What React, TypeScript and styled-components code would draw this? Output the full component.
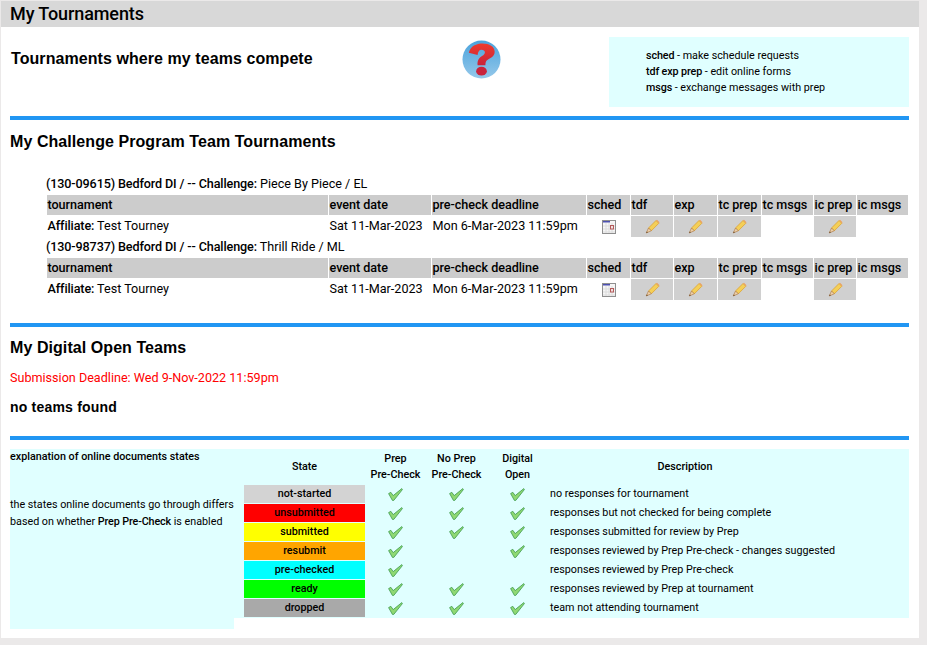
import styled, { createGlobalStyle } from "styled-components";

const GlobalStyle = createGlobalStyle`
  html, body {
    margin: 0;
    padding: 0;
    background: #ebe9e9;
  }
  body {
    font-family: Roboto, "Liberation Sans", sans-serif;
    font-size: 12.6px;
    color: #000;
  }
  strong {
    font-weight: 500;
    letter-spacing: -0.12px;
  }
`;

const COLUMNS = "281px 102px 154px 43px 42px 43px 43px 51px 42px 51px";

const teams = [
  { id: "(130-09615) Bedford DI / -- Challenge:", challenge: "Piece By Piece / EL" },
  { id: "(130-98737) Bedford DI / -- Challenge:", challenge: "Thrill Ride / ML" },
];

const headers = ["tournament", "event date", "pre-check deadline", "sched", "tdf", "exp", "tc prep", "tc msgs", "ic prep", "ic msgs"];

const states = [
  { name: "not-started", color: "#d3d3d3", prep: true, noPrep: true, digital: true, text: "no responses for tournament" },
  { name: "unsubmitted", color: "#ff0000", prep: true, noPrep: true, digital: true, text: "responses but not checked for being complete" },
  { name: "submitted", color: "#ffff00", prep: true, noPrep: true, digital: true, text: "responses submitted for review by Prep" },
  { name: "resubmit", color: "#ffa500", prep: true, noPrep: false, digital: true, text: "responses reviewed by Prep Pre-check - changes suggested" },
  { name: "pre-checked", color: "#00ffff", prep: true, noPrep: false, digital: false, text: "responses reviewed by Prep Pre-check" },
  { name: "ready", color: "#00ff00", prep: true, noPrep: true, digital: true, text: "responses reviewed by Prep at tournament" },
  { name: "dropped", color: "#a9a9a9", prep: true, noPrep: true, digital: true, text: "team not attending tournament" },
];

const HelpIcon = () => (
  <svg width="39" height="39" viewBox="0 0 40 40">
    <defs>
      <linearGradient id="helpBg" x1="0" y1="0" x2="0" y2="1">
        <stop offset="0" stopColor="#4aa3dc" />
        <stop offset="1" stopColor="#95c8ea" />
      </linearGradient>
      <linearGradient id="helpMark" x1="0" y1="0" x2="0" y2="1">
        <stop offset="0" stopColor="#ee3b2c" />
        <stop offset="1" stopColor="#c9233c" />
      </linearGradient>
    </defs>
    <circle cx="20" cy="20" r="19.5" fill="url(#helpBg)" />
    <path d="M7 13 C8.5 6 15 3.5 21 3.5 C28 3.5 33.5 6.5 33.5 12 C33.5 17 29 18.5 26 20.5 C24.5 21.5 24 23 24 26 L16 26 C15.5 21 17.5 18.5 20.5 16.5 C22.5 15 23.5 14 23.5 12.5 C23.5 11 22 10 20 10 C17.5 10 16.5 12 16 15.5 Z" fill="url(#helpMark)" />
    <ellipse cx="20" cy="32" rx="5.5" ry="4.5" fill="#c9233c" />
  </svg>
);

const CalendarIcon = () => (
  <svg width="14" height="14" viewBox="0 0 14 14">
    <rect x="0.5" y="0.5" width="13" height="13" fill="#f6f6f6" stroke="#8f8f8f" />
    <path d="M1 6H13M1 9H13M1 12H13M4 3V13M7 3V13M10 3V13" stroke="#dcdcdc" strokeWidth="1" />
    <rect x="1" y="1" width="7" height="1.5" fill="#4c50b0" />
    <rect x="8.5" y="5.5" width="3" height="3.5" fill="#f0e0e0" stroke="#b45a5a" />
  </svg>
);

const PencilIcon = () => (
  <svg width="15" height="15" viewBox="0 0 15 15">
    <path d="M3.5 9 L11 1.5 L13.8 4.3 L6.3 11.8 Z" fill="#f4cf57" stroke="#dca232" strokeWidth="0.8" />
    <path d="M11 1.5 L12 0.8 L14.5 3.2 L13.8 4.3 Z" fill="#eba25f" />
    <path d="M3.5 9 L6.3 11.8 L1.2 14 Z" fill="#ecd0a8" stroke="#a9713a" strokeWidth="0.6" />
    <path d="M1.2 14 L1.8 12.4 L3 13.3 Z" fill="#5a4020" />
  </svg>
);

const CheckIcon = () => (
  <svg width="15" height="13" viewBox="0 0 15 13">
    <path d="M0.6 5.6 L2.8 4.3 L5.2 7.6 L13.8 0.6 L14.4 1.6 L5.8 12.4 L4.4 12.4 Z" fill="#8fd873" stroke="#3f9a50" strokeWidth="0.8" strokeLinejoin="round" />
  </svg>
);

const Page = styled.div`
  width: 918px;
  height: 637px;
  margin-left: 1px;
  margin-top: 1px;
  background: #fff;
`;

const TitleBar = styled.div`
  height: 26px;
  background: #d8d8d8;
  font-size: 18px;
  font-weight: 500;
  letter-spacing: -0.1px;
  line-height: 26px;
  padding-left: 9px;
`;

const Intro = styled.div`
  display: flex;
  align-items: flex-start;
  margin-top: 10px;
  padding-left: 9px;
`;

const IntroTitle = styled.h2`
  width: 450px;
  margin: 0;
  padding: 12px 0 0 1px;
  font-family: "Liberation Sans", Arial, sans-serif;
  font-size: 16px;
  line-height: 20px;
  font-weight: bold;
  letter-spacing: 0.07px;
`;

const HelpWrap = styled.div`
  width: 147px;
  padding-top: 3px;
  padding-left: 1px;
`;

const KeyBox = styled.div`
  width: 300px;
  height: 70px;
  box-sizing: border-box;
  padding: 11px 0 0 37px;
  background: #e0ffff;
  font-size: 10.75px;
  line-height: 16px;
`;

const Divider = styled.hr`
  height: 4px;
  margin: 9px 10px 0 9px;
  border: 0;
  background: #2196f3;
`;

const SectionTitle = styled.h3`
  margin: 0;
  padding-left: 9px;
  font-family: "Liberation Sans", Arial, sans-serif;
  font-size: 16px;
  line-height: 20px;
  font-weight: bold;
  letter-spacing: 0.07px;
`;

const ChallengeTitle = styled(SectionTitle)`
  margin-top: 12px;
`;

const Teams = styled.div`
  margin-top: 22px;
  margin-bottom: 23px;
  padding-left: 45px;
`;

const TeamName = styled.div`
  height: 21px;
  line-height: 20px;
`;

const TeamTable = styled.div`
  display: grid;
  grid-template-columns: ${COLUMNS};
  column-gap: 1px;
  row-gap: 1px;
  margin-left: 1px;
`;

const HeadCell = styled.div`
  height: 20px;
  line-height: 20px;
  padding-left: 0.5px;
  background: #cccccc;
  font-weight: 500;
  letter-spacing: -0.04px;
`;

const BodyCell = styled.div`
  height: 21px;
  line-height: 20px;
  padding-left: 0.5px;
  white-space: nowrap;
`;

const IconCell = styled.div<{ $filled?: boolean }>`
  height: 21px;
  display: flex;
  align-items: center;
  justify-content: center;
  background: ${({ $filled }) => ($filled ? "#d0d0d0" : "transparent")};
`;

const DigitalTitle = styled(SectionTitle)`
  margin-top: 11px;
`;

const Deadline = styled.div`
  margin-top: 11px;
  padding-left: 9px;
  color: #ff0000;
  line-height: 18px;
`;

const NoTeams = styled(SectionTitle)`
  margin-top: 10px;
  margin-bottom: 19px;
  font-size: 14px;
  letter-spacing: 0.2px;
`;

const Legend = styled.div`
  display: flex;
  align-items: flex-start;
  margin: 9px 10px 0 9px;
  font-size: 10.75px;
`;

const LegendNotes = styled.div`
  width: 224px;
  height: 180px;
  flex-shrink: 0;
  background: #e0ffff;
  line-height: 17px;
  white-space: nowrap;
`;

const NotesTitle = styled.div`
  font-weight: 500;
  height: 47px;
  line-height: 15px;
`;

const LegendTable = styled.div`
  flex: 1;
  height: 169px;
  box-sizing: border-box;
  padding-left: 10px;
  background: #e0ffff;
  display: grid;
  grid-template-columns: 121px 61px 61px 61px 1fr;
  grid-template-rows: 36px repeat(7, 19px);
`;

const LegendHead = styled.div`
  display: flex;
  align-items: center;
  justify-content: center;
  text-align: center;
  line-height: 16px;
  font-weight: 500;
`;

const DescriptionHead = styled(LegendHead)`
  width: 274px;
`;

const StateCell = styled.div<{ $color: string }>`
  height: 18px;
  line-height: 18px;
  text-align: center;
  background: ${({ $color }) => $color};
  font-weight: 500;
`;

const TickCell = styled.div`
  display: flex;
  align-items: center;
  justify-content: center;
  height: 18px;
`;

const DescriptionCell = styled.div`
  height: 18px;
  line-height: 18px;
  padding-left: 2px;
`;

export default function App() {
  return (
    <>
      <GlobalStyle />
      <Page>
        <TitleBar>My Tournaments</TitleBar>
        <Intro>
          <IntroTitle>Tournaments where my teams compete</IntroTitle>
          <HelpWrap>
            <HelpIcon />
          </HelpWrap>
          <KeyBox>
            <div><strong>sched</strong> - make schedule requests</div>
            <div><strong>tdf exp prep</strong> - edit online forms</div>
            <div><strong>msgs</strong> - exchange messages with prep</div>
          </KeyBox>
        </Intro>
        <Divider />
        <ChallengeTitle>My Challenge Program Team Tournaments</ChallengeTitle>
        <Teams>
          {teams.map((team) => (
            <div key={team.id}>
              <TeamName>
                <strong>{team.id}</strong> {team.challenge}
              </TeamName>
              <TeamTable>
                {headers.map((h) => (
                  <HeadCell key={h}>{h}</HeadCell>
                ))}
                <BodyCell><strong>Affiliate:</strong> Test Tourney</BodyCell>
                <BodyCell>Sat 11-Mar-2023</BodyCell>
                <BodyCell>Mon 6-Mar-2023 11:59pm</BodyCell>
                <IconCell><CalendarIcon /></IconCell>
                <IconCell $filled><PencilIcon /></IconCell>
                <IconCell $filled><PencilIcon /></IconCell>
                <IconCell $filled><PencilIcon /></IconCell>
                <IconCell />
                <IconCell $filled><PencilIcon /></IconCell>
                <IconCell />
              </TeamTable>
            </div>
          ))}
        </Teams>
        <Divider />
        <DigitalTitle>My Digital Open Teams</DigitalTitle>
        <Deadline>Submission Deadline: Wed 9-Nov-2022 11:59pm</Deadline>
        <NoTeams>no teams found</NoTeams>
        <Divider />
        <Legend>
          <LegendNotes>
            <NotesTitle>explanation of online documents states</NotesTitle>
            the states online documents go through differs
            <br />
            based on whether <strong>Prep Pre-Check</strong> is enabled
          </LegendNotes>
          <LegendTable>
            <LegendHead>State</LegendHead>
            <LegendHead>Prep<br />Pre-Check</LegendHead>
            <LegendHead>No Prep<br />Pre-Check</LegendHead>
            <LegendHead>Digital<br />Open</LegendHead>
            <DescriptionHead>Description</DescriptionHead>
            {states.map((s) => (
              <div key={s.name} style={{ display: "contents" }}>
                <StateCell $color={s.color}>{s.name}</StateCell>
                <TickCell>{s.prep && <CheckIcon />}</TickCell>
                <TickCell>{s.noPrep && <CheckIcon />}</TickCell>
                <TickCell>{s.digital && <CheckIcon />}</TickCell>
                <DescriptionCell>{s.text}</DescriptionCell>
              </div>
            ))}
          </LegendTable>
        </Legend>
      </Page>
    </>
  );
}
